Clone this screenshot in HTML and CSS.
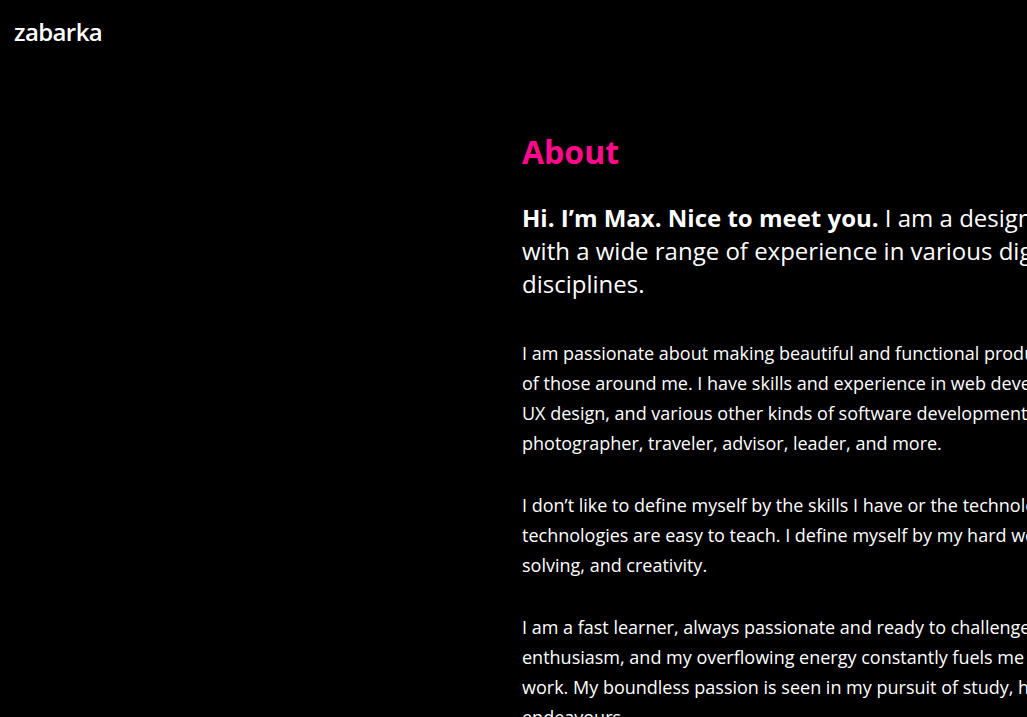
FILE: index.html
```html
<!DOCTYPE html>
<html lang="en">
<head>
<meta charset="utf-8">
<title>zabarka — About</title>
<link rel="stylesheet" href="styles.css">
</head>
<body>
<header class="site-header">
  <a class="logo" href="#">zabarka</a>
</header>
<main class="page">
  <div class="side"></div>
  <section class="about">
    <h1 class="about-title">About</h1>
    <p class="lead"><strong>Hi. I’m Max. Nice to meet you.</strong> I am a designer and developer<br>with a wide range of experience in various digital<br>disciplines.</p>
    <p class="body-text">I am passionate about making beautiful and functional products that improve the lives<br>of those around me. I have skills and experience in web development, graphic design,<br>UX design, and various other kinds of software development. I am also a writer,<br>photographer, traveler, advisor, leader, and more.</p>
    <p class="body-text">I don’t like to define myself by the skills I have or the technologies I know, because<br>technologies are easy to teach. I define myself by my hard work, attention to detail, problem<br>solving, and creativity.</p>
    <p class="body-text">I am a fast learner, always passionate and ready to challenge myself. I bring<br>enthusiasm, and my overflowing energy constantly fuels me in everything I do at<br>work. My boundless passion is seen in my pursuit of study, hobbies, and personal<br>endeavours.</p>
  </section>
</main>
</body>
</html>
```

FILE: styles.css
```css
html, body {
  margin: 0;
  padding: 0;
  background: #000;
  color: #fff;
  font-family: "Open Sans", "Noto Sans", sans-serif;
  overflow: hidden;
}

.site-header {
  display: flex;
  align-items: center;
  height: 62px;
  padding: 0 14px;
}

.logo {
  color: #fff;
  text-decoration: none;
  font-size: 24px;
  font-weight: 600;
  letter-spacing: -0.6px;
}

.page {
  display: grid;
  grid-template-columns: 522px 760px;
  width: 1282px;
}

.about {
  padding-top: 66px;
  white-space: nowrap;
}

.about-title {
  margin: 0 0 25px;
  font-size: 32px;
  font-weight: 700;
  line-height: 48px;
  color: #ff0a8c;
}

.lead {
  margin: 0 0 38px;
  font-size: 24px;
  line-height: 33px;
  font-weight: 400;
}

.lead strong {
  font-weight: 700;
}

.body-text {
  margin: 0 0 32px;
  font-size: 18px;
  line-height: 30px;
}
```
